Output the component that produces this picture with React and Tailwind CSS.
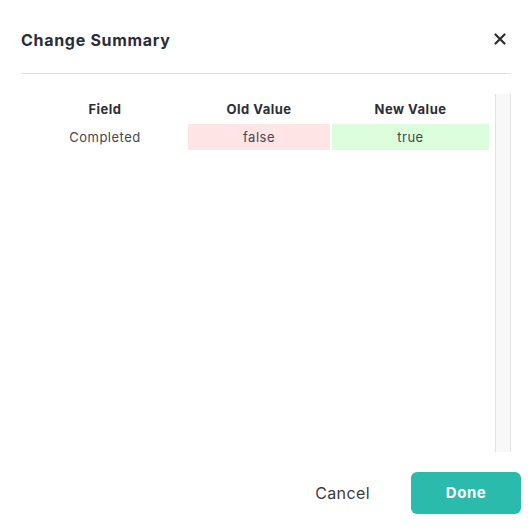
export default function App() {
  return (
    <div className="w-[532px] h-[529px] bg-white flex flex-col text-[#2d2d35]" style={{ fontFamily: "Inter, 'Noto Sans', sans-serif" }}>
      <div className="mx-[21px] h-[74px] flex items-center justify-between border-b border-[#dedede]">
        <h2 className="text-[16px] font-bold pt-[6px] tracking-[0.7px]">Change Summary</h2>
        <button className="w-[20px] h-[20px] flex items-center justify-center mr-[1px] mt-[5px]">
          <svg width="12" height="12" viewBox="0 0 12 12" fill="none" stroke="#2d2d35" strokeWidth="2.2" strokeLinecap="round">
            <path d="M1.5 1.5L10.5 10.5M10.5 1.5L1.5 10.5" />
          </svg>
        </button>
      </div>
      <div className="mx-[21px] mt-[20px] h-[358px] flex">
        <div className="flex-1">
          <table className="border-separate border-spacing-[2px] ml-[1px] text-[13px] tracking-[0.5px]">
            <thead>
              <tr className="h-[26px]">
                <th className="w-[162px] font-bold text-center pt-[1px]">Field</th>
                <th className="w-[142px] font-bold text-center pt-[1px]">Old Value</th>
                <th className="w-[157px] font-bold text-center pt-[1px]">New Value</th>
              </tr>
            </thead>
            <tbody>
              <tr className="h-[26px]">
                <td className="text-center text-[#454550] pt-[1px]">Completed</td>
                <td className="text-center bg-[#ffe5e5] text-[#454550] pt-[1px]">false</td>
                <td className="text-center bg-[#dcfedd] text-[#454550] pt-[1px]">true</td>
              </tr>
            </tbody>
          </table>
        </div>
        <div className="w-[16px] bg-[#f8f8f8] border-x border-[#e2e2e2]" />
      </div>
      <div className="flex items-center justify-end mt-[20px] pr-[11px] gap-[41px]">
        <button className="text-[16px] text-[#3b3b44] tracking-[0.4px]">Cancel</button>
        <button className="w-[110px] h-[42px] rounded-[6px] bg-[#2bbbad] text-white font-bold text-[15px] tracking-[0.5px]">Done</button>
      </div>
    </div>
  );
}
